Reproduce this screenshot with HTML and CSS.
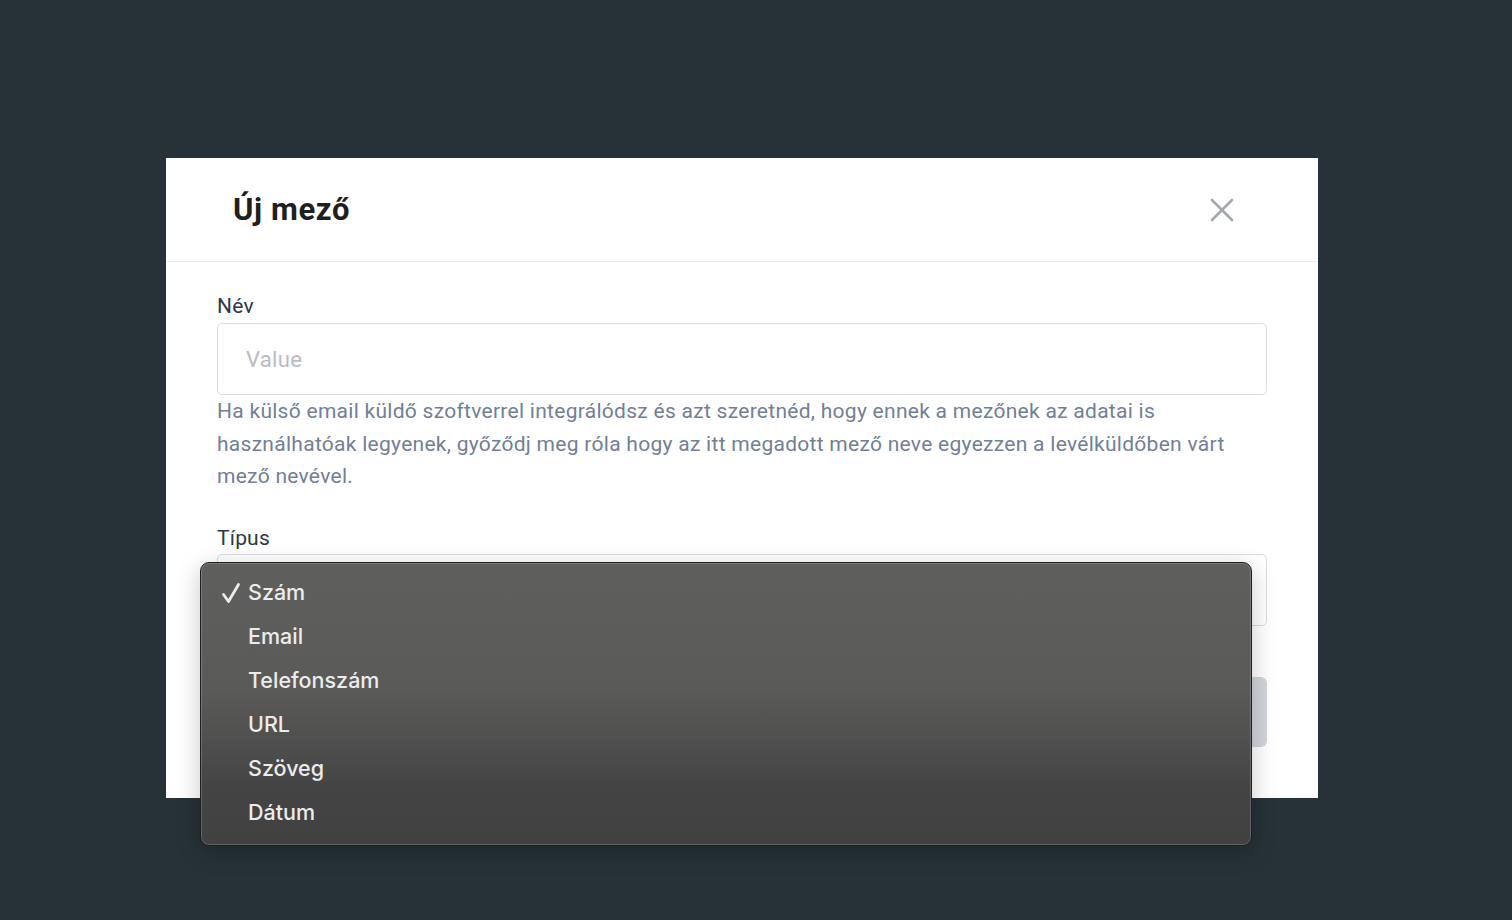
FILE: index.html
```html
<!DOCTYPE html>
<html lang="hu">
<head>
<meta charset="utf-8">
<title>Új mező</title>
<link rel="stylesheet" href="styles.css">
</head>
<body>
<div class="stage">
  <div class="modal">
    <div class="modal-header">
      <h2 class="modal-title">Új mező</h2>
      <button class="close-btn" aria-label="Bezárás">
        <svg width="24" height="24" viewBox="0 0 24 24"><path d="M2 2 L22 22 M22 2 L2 22" stroke="#a3a8b0" stroke-width="2.6" stroke-linecap="round"/></svg>
      </button>
    </div>
    <div class="modal-body">
      <label class="field-label">Név</label>
      <div class="input"><span class="placeholder">Value</span></div>
      <p class="help">Ha külső email küldő szoftverrel integrálódsz és azt szeretnéd, hogy ennek a mezőnek az adatai is<br>használhatóak legyenek, győződj meg róla hogy az itt megadott mező neve egyezzen a levélküldőben várt<br>mező nevével.</p>
      <label class="field-label second">Típus</label>
      <div class="select-wrap">
        <div class="input select"></div>
        <div class="dropdown">
          <div class="opt checked"><svg class="check" width="20" height="22" viewBox="0 0 20 22"><path d="M2.5 12.5 L7.5 19.5 L17.5 2.5" fill="none" stroke="#ececec" stroke-width="2.8" stroke-linecap="round" stroke-linejoin="round"/></svg>Szám</div>
          <div class="opt">Email</div>
          <div class="opt">Telefonszám</div>
          <div class="opt">URL</div>
          <div class="opt">Szöveg</div>
          <div class="opt">Dátum</div>
        </div>
      </div>
      <button class="submit">Mentés</button>
    </div>
  </div>
</div>
</body>
</html>
```
FILE: styles.css
```css
html, body {
  margin: 0;
  padding: 0;
}
body {
  background: #263238;
  font-family: Roboto, "Liberation Sans", sans-serif;
  width: 1512px;
  height: 920px;
  overflow: hidden;
}
.stage {
  padding: 158px 0 0 166px;
}
.modal {
  width: 1152px;
  height: 640px;
  background: #ffffff;
  box-sizing: border-box;
}
.modal-header {
  height: 104px;
  box-sizing: border-box;
  border-bottom: 1px solid #ebedf0;
  display: flex;
  align-items: center;
  justify-content: space-between;
  padding: 0 84px 0 67px;
}
.modal-title {
  margin: 0;
  font-size: 31px;
  font-weight: 700;
  color: #1f1f1f;
  letter-spacing: 0.6px;
}
.close-btn {
  border: 0;
  background: none;
  padding: 0;
  width: 24px;
  height: 24px;
  display: flex;
}
.modal-body {
  padding: 32px 51px 51px;
  display: flex;
  flex-direction: column;
}
.field-label {
  display: block;
  font-size: 21px;
  line-height: 24px;
  color: #2d3748;
  margin-bottom: 5px;
  letter-spacing: 0.2px;
}
.field-label.second {
  margin-top: 33px;
  margin-bottom: 4px;
}
.input {
  height: 72px;
  box-sizing: border-box;
  border: 1px solid #d9dce1;
  border-radius: 5px;
  display: flex;
  align-items: center;
  padding: 0 28px;
}
.placeholder {
  font-size: 22px;
  color: #b9bcc0;
  letter-spacing: 0.3px;
}
.help {
  margin: 0;
  font-size: 21px;
  line-height: 32.5px;
  color: #718096;
  letter-spacing: 0.28px;
  white-space: nowrap;
}
.select-wrap {
  position: relative;
}
.submit {
  margin-top: 51px;
  height: 70px;
  border: 0;
  border-radius: 6px;
  background: #d1d5db;
  color: #ffffff;
  font-family: Roboto, sans-serif;
  font-size: 20px;
}
.dropdown {
  position: absolute;
  left: -17px;
  top: 8px;
  width: 1052px;
  height: 284px;
  box-sizing: border-box;
  border-radius: 9px;
  background: linear-gradient(180deg, #5f5f5d 0%, #5a5b59 45%, #444444 80%, #414141 100%);
  border: 1px solid #1e1e1e;
  box-shadow: inset 0 0 0 1px rgba(255,255,255,0.18), 0 6px 24px rgba(0,0,0,0.22);
  padding: 7px 0 0 0;
  z-index: 5;
}
.opt {
  height: 44px;
  display: flex;
  align-items: center;
  padding-left: 47px;
  font-family: Inter, "Noto Sans", sans-serif;
  font-weight: 500;
  font-size: 21.5px;
  color: #ececec;
  position: relative;
}
.check {
  position: absolute;
  left: 20px;
  top: 12px;
}
```
